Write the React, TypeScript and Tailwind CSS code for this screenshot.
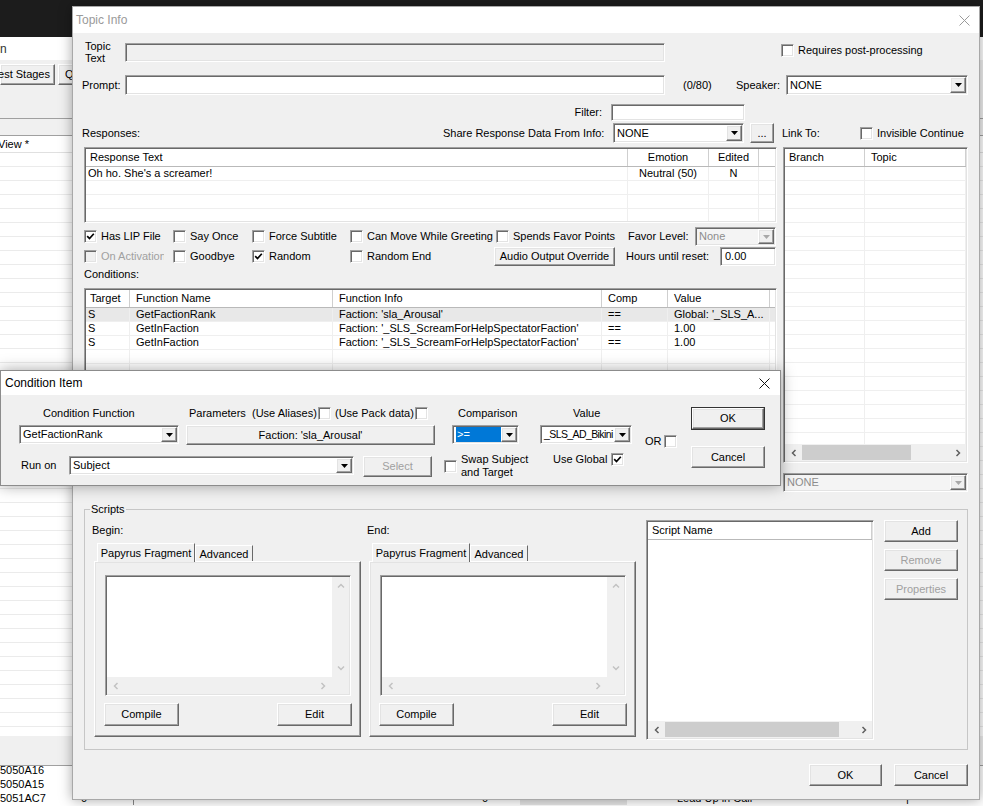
import React from "react";

const sunken =
  "border border-t-[#a0a0a0] border-l-[#a0a0a0] border-b-white border-r-white shadow-[inset_1px_1px_0_#696969,inset_-1px_-1px_0_#e3e3e3]";
const raised =
  "border border-t-white border-l-white border-b-[#696969] border-r-[#696969] shadow-[inset_-1px_-1px_0_#a0a0a0,inset_1px_1px_0_#e3e3e3]";

function Chev({ dir, c = "#606060" }: { dir: "l" | "r" | "u" | "d"; c?: string }) {
  const d =
    dir === "l"
      ? "M5.5 1 L2.5 4 L5.5 7"
      : dir === "r"
      ? "M2.5 1 L5.5 4 L2.5 7"
      : dir === "u"
      ? "M1 5.5 L4 2.5 L7 5.5"
      : "M1 2.5 L4 5.5 L7 2.5";
  return (
    <svg width="8" height="8" viewBox="0 0 8 8">
      <path d={d} stroke={c} strokeWidth="1.5" fill="none" />
    </svg>
  );
}

function Tri({ c = "#000" }: { c?: string }) {
  return (
    <svg width="7" height="4" viewBox="0 0 7 4">
      <path d="M0 0 H7 L3.5 4 Z" fill={c} />
    </svg>
  );
}

function XIcon({ c }: { c: string }) {
  return (
    <svg width="11" height="11" viewBox="0 0 11 11">
      <path d="M0.5 0.5 L10.5 10.5 M10.5 0.5 L0.5 10.5" stroke={c} strokeWidth="1" />
    </svg>
  );
}

function Check({ checked = false, disabled = false, cls = "" }: { checked?: boolean; disabled?: boolean; cls?: string }) {
  return (
    <span
      className={`flex shrink-0 items-center justify-center w-[13px] h-[13px] ${sunken} ${
        disabled ? "bg-[#f0f0f0]" : "bg-white"
      } ${cls}`}
    >
      {checked && (
        <svg width="9" height="9" viewBox="0 0 9 9">
          <path d="M1.2 4.2 L3.5 6.6 L7.8 1.8" stroke="#000" strokeWidth="1.7" fill="none" />
        </svg>
      )}
    </span>
  );
}

function CB({
  label,
  checked = false,
  disabled = false,
  cls = "",
}: {
  label: string;
  checked?: boolean;
  disabled?: boolean;
  cls?: string;
}) {
  return (
    <div className={`flex items-center shrink-0 whitespace-nowrap overflow-hidden ${cls}`}>
      <Check checked={checked} disabled={disabled} />
      <span className={`ml-[4px] leading-[13px] ${disabled ? "text-[#a0a0a0]" : ""}`}>{label}</span>
    </div>
  );
}

function Combo({
  cls,
  text,
  disabled = false,
  sel = false,
  tcls = "",
}: {
  cls: string;
  text: string;
  disabled?: boolean;
  sel?: boolean;
  tcls?: string;
}) {
  return (
    <div
      className={`${cls} shrink-0 flex p-[1px] ${sunken} ${
        disabled ? "bg-[#f4f4f4] text-[#8d8d8d]" : "bg-white"
      }`}
    >
      <div className={`flex-1 min-w-0 flex items-center overflow-hidden whitespace-nowrap pl-[2px] ${tcls}`}>
        {sel ? (
          <span className="w-full h-full flex items-center bg-[#0078d7] text-white pl-[1px]">{text}</span>
        ) : (
          text
        )}
      </div>
      <div className={`w-[16px] shrink-0 flex items-center justify-center bg-[#f0f0f0] ${raised}`}>
        <Tri c={disabled ? "#a8a8a8" : "#000"} />
      </div>
    </div>
  );
}

function Btn({
  cls,
  children,
  disabled = false,
}: {
  cls: string;
  children: React.ReactNode;
  disabled?: boolean;
}) {
  return (
    <div
      className={`${cls} shrink-0 flex items-center justify-center whitespace-nowrap bg-[#f0f0f0] ${raised} ${
        disabled ? "text-[#a0a0a0]" : ""
      }`}
    >
      {children}
    </div>
  );
}

function HScroll({ thumb }: { thumb: string }) {
  return (
    <div className="h-[17px] shrink-0 flex items-center bg-[#f0f0f0]">
      <div className="w-[17px] h-full flex items-center justify-center">
        <Chev dir="l" />
      </div>
      <div className="flex-1 h-full flex items-center">
        <div className={`${thumb} h-[15px] bg-[#cdcdcd]`} />
      </div>
      <div className="w-[17px] h-full flex items-center justify-center">
        <Chev dir="r" />
      </div>
    </div>
  );
}

type Col = { label: string; w: string; center?: boolean };

function ListView({
  cls,
  cols,
  rows = [],
  grid = true,
  sel = -1,
  nrows = 30,
  hs,
}: {
  cls: string;
  cols: Col[];
  rows?: string[][];
  grid?: boolean;
  sel?: number;
  nrows?: number;
  hs?: React.ReactNode;
}) {
  return (
    <div className={`${cls} shrink-0 ${sunken} p-[1px] bg-white flex flex-col overflow-hidden`}>
      <div className="flex h-[18px] shrink-0 border-b border-[#b9b9b9]">
        {cols.map((c, i) => (
          <div
            key={i}
            className={`${c.w} shrink-0 border-r border-[#cfcfcf] leading-[17px] whitespace-nowrap overflow-hidden ${
              c.center ? "text-center" : i === 0 ? "pl-[4px]" : "pl-[6px]"
            }`}
          >
            {c.label}
          </div>
        ))}
      </div>
      <div className="flex-1 min-h-0 overflow-hidden">
        {Array.from({ length: nrows }).map((_, r) => (
          <div
            key={r}
            className={`flex h-[14px] ${grid ? "border-b border-[#efefef]" : ""} ${
              sel === r ? "bg-[#e8e8e8]" : ""
            }`}
          >
            {cols.map((c, i) => (
              <div
                key={i}
                className={`${c.w} shrink-0 ${grid ? "border-r border-[#efefef]" : ""} leading-[13px] whitespace-nowrap overflow-hidden ${
                  c.center ? "text-center" : i === 0 ? "pl-[2px]" : "pl-[6px]"
                }`}
              >
                {rows[r] ? rows[r][i] : ""}
              </div>
            ))}
          </div>
        ))}
      </div>
      {hs}
    </div>
  );
}

function ScriptEditor() {
  return (
    <div className={`ml-[10px] mt-[13px] w-[246px] h-[121px] shrink-0 ${sunken} p-[1px] bg-white flex flex-col`}>
      <div className="flex flex-1 min-h-0">
        <div className="flex-1 bg-white" />
        <div className="w-[17px] bg-[#f0f0f0] flex flex-col justify-between items-center py-[5px]">
          <Chev dir="u" c="#c2c2c2" />
          <Chev dir="d" c="#c2c2c2" />
        </div>
      </div>
      <div className="h-[17px] flex shrink-0">
        <div className="flex-1 bg-[#f0f0f0] flex justify-between items-center px-[5px]">
          <Chev dir="l" c="#c2c2c2" />
          <Chev dir="r" c="#c2c2c2" />
        </div>
        <div className="w-[17px] bg-[#f0f0f0]" />
      </div>
    </div>
  );
}

function ScriptPanel({ label, cls }: { label: string; cls: string }) {
  return (
    <div className={`${cls} w-[270px] flex flex-col shrink-0`}>
      <div className="mt-[8px] h-[13px] leading-[13px]">{label}</div>
      <div className="mt-[6px] flex items-end h-[19px] pl-[5px]">
        <div className="relative z-10 w-[98px] h-[19px] bg-[#f0f0f0] border-t border-l border-white border-r border-r-[#696969] flex items-center justify-center">
          Papyrus Fragment
        </div>
        <div className="w-[58px] h-[17px] bg-[#f0f0f0] border-t border-l border-white border-r border-r-[#696969] flex items-center justify-center">
          Advanced
        </div>
      </div>
      <div className={`-mt-[1px] ml-[2px] w-[267px] h-[176px] ${raised} bg-[#f0f0f0] flex flex-col`}>
        <ScriptEditor />
        <div className="mt-[7px] flex justify-between pl-[9px] pr-[8px]">
          <Btn cls="w-[75px] h-[23px]">Compile</Btn>
          <Btn cls="w-[75px] h-[23px]">Edit</Btn>
        </div>
      </div>
    </div>
  );
}

function BackgroundWindow() {
  return (
    <div className="absolute left-0 top-[37px] w-[983px] h-[769px] bg-white flex flex-col overflow-hidden">
      <div className="h-[23px] shrink-0 flex items-center text-[12px] text-[#333]">n</div>
      <div className="h-[28px] shrink-0 bg-[#f0f0f0] flex items-center">
        <Btn cls="w-[55px] h-[21px] justify-end pr-[4px]">est Stages</Btn>
        <Btn cls="ml-[3px] w-[80px] h-[21px] justify-start pl-[6px]">Quest Data</Btn>
      </div>
      <div className="h-[31px] shrink-0 bg-[#f0f0f0] border-b border-[#a0a0a0]" />
      <div className="h-[17px] shrink-0 bg-[#f0f0f0] border-b border-[#a0a0a0]" />
      <div className="h-[17px] shrink-0 bg-white border-b border-[#e0e0e0] flex items-center">
        <span className="-ml-[2px]">View *</span>
      </div>
      <div className="h-[583px] shrink-0 overflow-hidden">
        {Array.from({ length: 42 }).map((_, i) => (
          <div key={i} className="h-[14px] border-b border-[#ebebeb]" />
        ))}
      </div>
      <div className="h-[30px] shrink-0 bg-[#f0f0f0] border-b border-[#a0a0a0]" />
      <div className="h-[14px] shrink-0 flex items-center leading-[13px] -mt-[3px]">5050A16</div>
      <div className="h-[14px] shrink-0 flex items-center leading-[13px]">5050A15</div>
      <div className="h-[14px] shrink-0 flex items-center leading-[13px]">
        <span className="w-[81px]">5051AC7</span>
        <span className="w-[52px]">0 ''</span>
        <span className="w-[349px] border-l border-[#888] h-full" />
        <span className="w-[38px]">0</span>
        <span className="w-[107px] h-full bg-[#e6e6e6]" />
        <span className="w-[50px]" />
        <span className="w-[229px]">Lead Up in Call</span>
        <span>|</span>
      </div>
    </div>
  );
}

function MainWindow() {
  return (
    <div className="absolute left-[72px] top-[6px] w-[908px] h-[794px] bg-[#f0f0f0] border border-[#a8a8a8] flex flex-col shadow-[0_0_12px_rgba(0,0,0,0.35)]">
      <div className="h-[26px] shrink-0 bg-white flex items-center justify-between">
        <span className="pl-[3px] text-[12px] text-[#9a9a9a]">Topic Info</span>
        <span className="mr-[9px] flex">
          <XIcon c="#9a9a9a" />
        </span>
      </div>

      <div className="mt-[7px] h-[28px] shrink-0 flex items-start">
        <span className="ml-[12px] w-[40px] leading-[12px]">
          Topic
          <br />
          Text
        </span>
        <div className={`mt-[3px] w-[540px] h-[19px] bg-[#f0f0f0] ${sunken}`} />
        <Check cls="ml-[116px] mt-[4px]" />
        <span className="ml-[4px] mt-[4px] leading-[13px]">Requires post-processing</span>
      </div>

      <div className="mt-[7px] h-[20px] shrink-0 flex items-center">
        <span className="ml-[9px] w-[43px]">Prompt:</span>
        <div className={`w-[540px] h-[20px] bg-white ${sunken}`} />
        <span className="ml-[18px] w-[53px]">(0/80)</span>
        <span className="w-[50px]">Speaker:</span>
        <Combo cls="w-[182px] h-[20px]" text="NONE" />
      </div>

      <div className="mt-[9px] h-[17px] shrink-0 flex items-center">
        <span className="ml-[487px] w-[42px] text-right">Filter:</span>
        <div className={`ml-[9px] w-[134px] h-[17px] bg-white ${sunken}`} />
      </div>

      <div className="mt-[2px] h-[20px] shrink-0 flex items-center">
        <span className="ml-[9px] w-[361px]">Responses:</span>
        <span className="w-[160px] whitespace-nowrap">Share Response Data From Info:</span>
        <Combo cls="ml-[10px] w-[131px] h-[20px]" text="NONE" />
        <Btn cls="ml-[6px] w-[24px] h-[20px]">...</Btn>
        <span className="ml-[8px] w-[78px]">Link To:</span>
        <CB label="Invisible Continue" />
      </div>

      <div className="mt-[4px] shrink-0 flex items-start">
        <div className="ml-[11px] w-[693px] flex flex-col">
          <ListView
            cls="w-[693px] h-[76px]"
            cols={[
              { label: "Response Text", w: "w-[542px]" },
              { label: "Emotion", w: "w-[81px]", center: true },
              { label: "Edited", w: "w-[50px]", center: true },
              { label: "", w: "w-[20px]" },
            ]}
            rows={[["Oh ho. She's a screamer!", "Neutral (50)", "N", ""]]}
            nrows={5}
          />
          <div className="mt-[4px] h-[19px] flex items-center">
            <CB cls="w-[89px]" label="Has LIP File" checked />
            <CB cls="w-[79px]" label="Say Once" />
            <CB cls="w-[98px]" label="Force Subtitle" />
            <CB cls="w-[146px]" label="Can Move While Greeting" />
            <CB cls="w-[132px]" label="Spends Favor Points" />
            <span className="w-[67px] shrink-0">Favor Level:</span>
            <Combo cls="w-[81px] h-[19px]" text="None" disabled />
          </div>
          <div className="mt-[1px] h-[19px] flex items-center">
            <CB cls="w-[80px]" label="On Activation" disabled />
            <span className="w-[9px] shrink-0" />
            <CB cls="w-[79px]" label="Goodbye" />
            <CB cls="w-[98px]" label="Random" checked />
            <CB cls="w-[144px]" label="Random End" />
            <Btn cls="w-[121px] h-[19px]">Audio Output Override</Btn>
            <span className="ml-[11px] w-[94px] shrink-0 whitespace-nowrap">Hours until reset:</span>
            <div className={`w-[56px] h-[19px] bg-white ${sunken} flex items-center pl-[4px]`}>0.00</div>
          </div>
          <div className="mt-[2px] h-[13px] leading-[13px]">Conditions:</div>
          <ListView
            cls="mt-[7px] w-[693px] h-[178px]"
            cols={[
              { label: "Target", w: "w-[44px]" },
              { label: "Function Name", w: "w-[203px]" },
              { label: "Function Info", w: "w-[269px]" },
              { label: "Comp", w: "w-[66px]" },
              { label: "Value", w: "w-[102px]" },
              { label: "", w: "w-[20px]" },
            ]}
            rows={[
              ["S", "GetFactionRank", "Faction: 'sla_Arousal'", "==", "Global: '_SLS_A...", ""],
              ["S", "GetInFaction", "Faction: '_SLS_ScreamForHelpSpectatorFaction'", "==", "1.00", ""],
              ["S", "GetInFaction", "Faction: '_SLS_ScreamForHelpSpectatorFaction'", "==", "1.00", ""],
            ]}
            sel={0}
            nrows={12}
          />
        </div>
        <div className="ml-[6px] w-[185px] flex flex-col">
          <ListView
            cls="w-[185px] h-[316px]"
            cols={[
              { label: "Branch", w: "w-[80px]" },
              { label: "Topic", w: "w-[101px]" },
            ]}
            nrows={21}
            hs={<HScroll thumb="w-[109px]" />}
          />
          <Combo cls="mt-[10px] w-[185px] h-[19px]" text="NONE" disabled />
        </div>
      </div>

      <fieldset className="mt-[11px] ml-[11px] w-[884px] h-[247px] shrink-0 border border-[#c6c6c6]">
        <legend className="ml-[5px] px-[1px] leading-[13px]">Scripts</legend>
        <div className="flex items-start">
          <ScriptPanel cls="ml-[7px]" label="Begin:" />
          <ScriptPanel cls="ml-[5px]" label="End:" />
          <ListView
            cls="ml-[9px] mt-[4px] w-[228px] h-[220px]"
            cols={[{ label: "Script Name", w: "w-[224px]" }]}
            grid={false}
            nrows={15}
            hs={<HScroll thumb="w-[174px]" />}
          />
          <div className="ml-[10px] mt-[4px] w-[74px] flex flex-col">
            <Btn cls="w-[74px] h-[22px]">Add</Btn>
            <Btn cls="mt-[7px] w-[74px] h-[22px]" disabled>
              Remove
            </Btn>
            <Btn cls="mt-[7px] w-[74px] h-[22px]" disabled>
              Properties
            </Btn>
          </div>
        </div>
      </fieldset>

      <div className="mt-[14px] h-[22px] shrink-0 flex justify-end pr-[11px]">
        <Btn cls="w-[73px] h-[22px]">OK</Btn>
        <Btn cls="ml-[12px] w-[74px] h-[22px]">Cancel</Btn>
      </div>
    </div>
  );
}

function ConditionDialog() {
  return (
    <div className="absolute left-0 top-[370px] w-[781px] h-[116px] bg-[#f0f0f0] border border-[#8c8c8c] flex flex-col shadow-[0_0_14px_rgba(0,0,0,0.35)]">
      <div className="h-[24px] shrink-0 bg-white flex items-center justify-between">
        <span className="pl-[4px] text-[12px] text-black">Condition Item</span>
        <span className="mr-[10px] flex">
          <XIcon c="#111" />
        </span>
      </div>
      <div className="flex flex-1">
        <div className="w-[690px] flex flex-col">
          <div className="mt-[12px] h-[13px] flex items-center leading-[13px] whitespace-nowrap">
            <span className="ml-[42px] w-[146px] shrink-0">Condition Function</span>
            <span className="w-[63px] shrink-0">Parameters</span>
            <span className="w-[66px] shrink-0">(Use Aliases)</span>
            <Check />
            <span className="ml-[4px] w-[80px] shrink-0">(Use Pack data)</span>
            <Check />
            <span className="ml-[30px] w-[115px] shrink-0">Comparison</span>
            <span>Value</span>
          </div>
          <div className="mt-[5px] h-[20px] flex items-start">
            <Combo cls="ml-[18px] w-[160px] h-[19px]" text="GetFactionRank" />
            <Btn cls="ml-[7px] w-[249px] h-[20px]">Faction: 'sla_Arousal'</Btn>
            <Combo cls="ml-[17px] w-[67px] h-[19px]" text=">=" sel />
            <Combo
              cls="ml-[21px] w-[92px] h-[19px]"
              text="_SLS_AD_Bikini"
              tcls="text-[10.5px] tracking-[-0.6px]"
            />
            <span className="ml-[13px] mt-[10px] w-[16px] leading-[13px]">OR</span>
            <Check cls="ml-[3px] mt-[10px]" />
          </div>
          <div className="mt-[8px] h-[25px] flex items-start">
            <span className="ml-[20px] mt-[6px] w-[48px] leading-[13px]">Run on</span>
            <Combo cls="mt-[3px] w-[285px] h-[19px]" text="Subject" />
            <Btn cls="ml-[9px] mt-[3px] w-[69px] h-[21px]" disabled>
              Select
            </Btn>
            <Check cls="ml-[12px] mt-[7px]" />
            <span className="ml-[4px] w-[92px] leading-[13px]">
              Swap Subject
              <br />
              and Target
            </span>
            <span className="w-[58px] leading-[13px]">Use Global</span>
            <Check checked />
          </div>
        </div>
        <div className="w-[74px] flex flex-col">
          <div className="mt-[12px] w-[74px] h-[23px] border border-[#333] flex">
            <Btn cls="w-full h-full">OK</Btn>
          </div>
          <Btn cls="mt-[16px] w-[74px] h-[22px]">Cancel</Btn>
        </div>
      </div>
    </div>
  );
}

export default function App() {
  return (
    <div className="relative w-[983px] h-[806px] overflow-hidden bg-[#1c1c1c] font-['Liberation_Sans',Arial,sans-serif] text-[11px] text-black">
      <BackgroundWindow />
      <MainWindow />
      <ConditionDialog />
    </div>
  );
}
